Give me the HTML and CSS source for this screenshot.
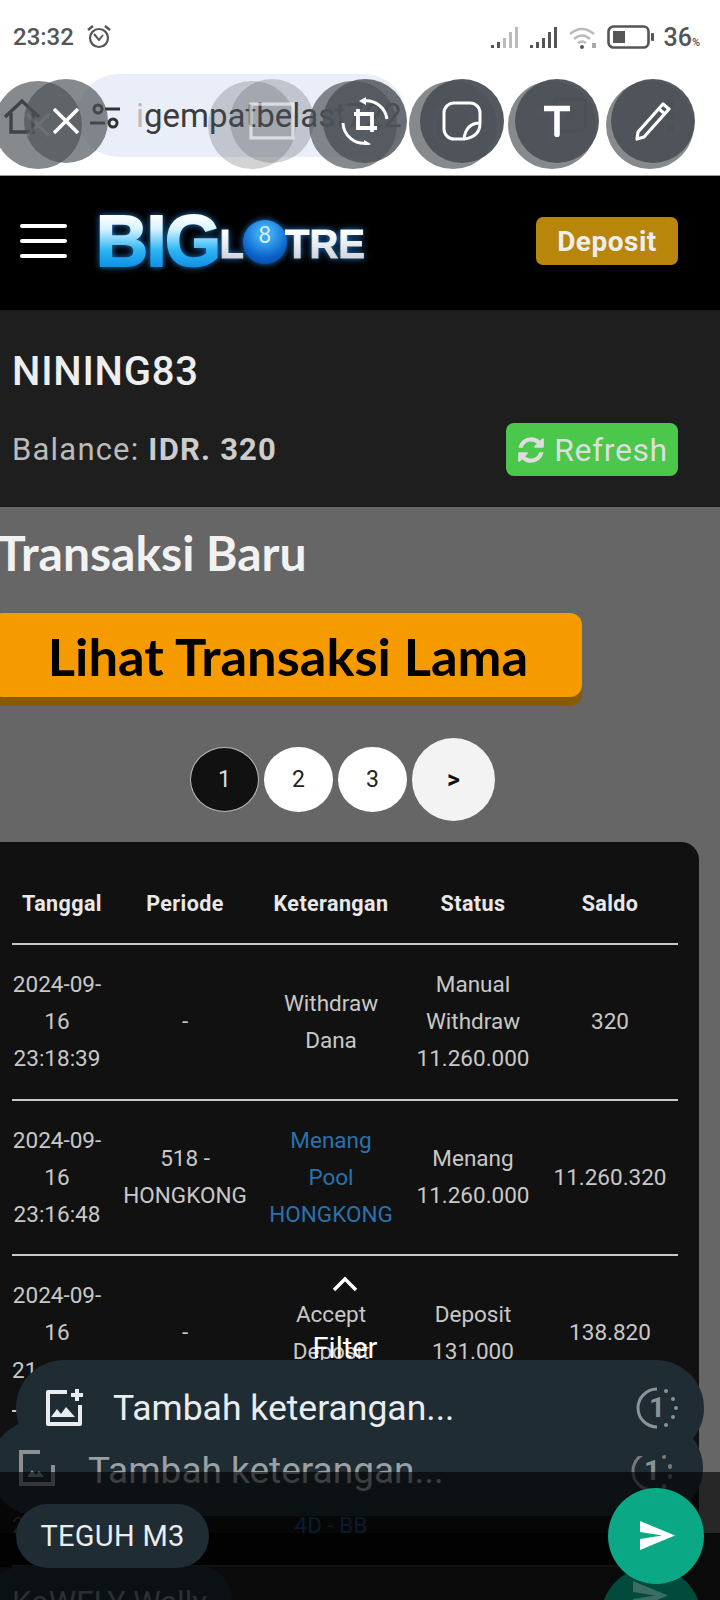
FILE: index.html

```html
<!DOCTYPE html>
<html lang="id">
<head>
<meta charset="utf-8"/>
<title>Transaksi Baru</title>
<link rel="stylesheet" href="styles.css">
</head>
<body>

<div class="status">
  <div class="status-left">
    <span class="clock">23:32</span>
    <svg class="alarm" viewBox="0 0 26 26" width="26" height="26"><circle cx="13" cy="14" r="9" fill="none" stroke="#555" stroke-width="2.2"/><path d="M8 10l5 6 4-5" fill="none" stroke="#555" stroke-width="2"/><path d="M2 6l5-4M24 6l-5-4" stroke="#555" stroke-width="2.4"/></svg>
  </div>
  <div class="status-right">
    <svg viewBox="0 0 30 24" width="30" height="24"><path d="M1 20h3v3H1zM7 17h3v6H7z" fill="#555"/><path d="M13 13h3v10h-3zM19 7h3v16h-3zM25 2h3v21h-3z" fill="#bbb"/></svg>
    <svg viewBox="0 0 30 24" width="30" height="24"><path d="M1 20h3v3H1zM7 17h3v6H7zM13 13h3v10h-3zM19 7h3v16h-3zM25 2h3v21h-3z" fill="#555"/></svg>
    <svg viewBox="0 0 30 24" width="30" height="24"><path d="M2 9q12-10 24 0M6 14q8-7 16 0M10 18q4-3 8 0" fill="none" stroke="#bbb" stroke-width="2.4"/><circle cx="14" cy="22" r="2" fill="#555"/><rect x="24" y="18" width="4" height="5" fill="#aaa"/></svg>
    <svg viewBox="0 0 48 24" width="48" height="24"><rect x="1.5" y="1.5" width="40" height="21" rx="5" fill="none" stroke="#555" stroke-width="2.6"/><rect x="6" y="6" width="12" height="12" fill="#555"/><rect x="44" y="8" width="3" height="8" rx="1" fill="#555"/></svg>
    <span class="batt">36<small>%</small></span>
  </div>
</div>

<div class="browser">
  <svg class="home-ic" viewBox="0 0 38 36" width="38" height="36"><path d="M2 19L19 3l17 16M8 15v19h22V15" fill="none" stroke="#222" stroke-width="3.4"/></svg>
  <div class="url-pill">
    <svg viewBox="0 0 32 28" width="32" height="28"><circle cx="9" cy="7" r="4" fill="none" stroke="#333" stroke-width="3"/><path d="M16 7h15M1 21h15" stroke="#333" stroke-width="3"/><circle cx="24" cy="21" r="4" fill="none" stroke="#333" stroke-width="3"/></svg>
    <span class="url-text"><i>i</i>gempatbelast722</span>
  </div>
  <span class="tab-count">3</span>
  <span class="menu-dots"></span>
</div>

<!-- tombol editor foto di atas bar browser -->
<div class="tool ghost tool-a"><svg viewBox="0 0 24 24" width="24" height="24"><path d="M1 1l22 22M23 1L1 23" stroke="#fff" stroke-opacity=".3" stroke-width="3.4"/></svg></div>
<div class="tool soft tool-b"></div>
<div class="tool ghost tool-c"><svg viewBox="0 0 48 48" width="44" height="44"><path d="M8 20a17 17 0 0 1 30-8M40 28a17 17 0 0 1-30 8" fill="none" stroke="#fff" stroke-opacity=".2" stroke-width="3"/></svg></div>
<div class="tool ghost tool-d"><svg viewBox="0 0 40 40" width="40" height="40"><rect x="2" y="2" width="36" height="36" rx="10" fill="none" stroke="#fff" stroke-opacity=".25" stroke-width="3"/></svg></div>
<div class="tool ghost tool-e"><svg viewBox="0 0 28 34" width="28" height="34"><path d="M0 4h28M14 4v30" stroke="#fff" stroke-opacity=".3" stroke-width="5"/></svg></div>
<div class="tool ghost tool-f"></div>

<div class="tool half tool-g"><svg viewBox="0 0 26 26" width="26" height="26"><path d="M1 1l24 24M25 1L1 25" stroke="#fff" stroke-width="3.6"/></svg></div>
<div class="tool soft tool-h"><svg viewBox="0 0 34 28" width="46" height="38"><rect x="1.5" y="1.5" width="31" height="25" fill="none" stroke="#fff" stroke-opacity=".6" stroke-width="2.4"/></svg></div>
<div class="tool solid crop tool-i"><svg viewBox="0 0 48 48" width="48" height="48"><path d="M22 4A21 21 0 0 1 46 22M2 26a21 21 0 0 0 24 20" fill="none" stroke="#fff" stroke-width="3"/><path d="M18 4l7-4v8zM30 47l-7 4v-8z" fill="#fff"/><path d="M13 17h18v18M17 12v19h19" fill="none" stroke="#fff" stroke-width="3.8"/></svg></div>
<div class="tool solid tool-j"><svg viewBox="0 0 40 40" width="40" height="40"><path d="M38 22V12a10 10 0 0 0-10-10H12A10 10 0 0 0 2 12v16a10 10 0 0 0 10 10h10q16-2 16-16-14 0-16 16" fill="none" stroke="#fff" stroke-width="3"/></svg></div>
<div class="tool solid tool-k"><svg viewBox="0 0 28 34" width="26" height="32"><path d="M0 3.5h28M14 3.500v28" stroke="#fff" stroke-width="6" stroke-linecap="round"/></svg></div>
<div class="tool solid tool-l"><svg viewBox="0 0 36 40" width="36" height="40"><path d="M28 3l6 5L9 36l-7 2 1-7z" fill="none" stroke="#fff" stroke-width="3.2" stroke-linejoin="round"/><path d="M24 8l6 5" stroke="#fff" stroke-width="3"/></svg></div>

<header class="site-head">
  <div class="burger"><span></span><span></span><span></span></div>
  <div class="logo">
    <span class="logo-big">BIG</span>
    <span class="logo-small">L</span>
    <span class="logo-ball">8</span>
    <span class="logo-small">TRE</span>
  </div>
  <a class="deposit" href="#">Deposit</a>
</header>

<section class="account">
  <div class="username">NINING83</div>
  <div class="balance-row">
    <div class="balance">Balance: <b>IDR. 320</b></div>
    <a class="refresh" href="#"><svg viewBox="0 0 1792 1792" width="30" height="30"><path fill="#ddd" d="M1639 1056q0 5-1 7-64 268-268 434.5t-478 166.5q-146 0-282.5-55t-243.500-157l-129 129q-19 19-45 19t-45-19-19-45v-448q0-26 19-45t45-19h448q26 0 45 19t19 45-19 45l-137 137q71 66 161 102t187 36q134 0 250-65t186-179q11-17 53-117 8-23 30-23h192q13 0 22.500 9.500t9.500 22.500zm25-800v448q0 26-19 45t-45 19h-448q-26 0-45-19t-19-45 19-45l138-138q-148-137-349-137-134 0-250 65t-186 179q-11 17-53 117-8 23-30 23h-199q-13 0-22.500-9.500t-9.500-22.500v-7q65-268 270-434.500t480-166.500q146 0 284 55.500t245 156.500l130-129q19-19 45-19t45 19 19 45z"/></svg>Refresh</a>
  </div>
</section>

<main class="content">
  <h1 class="page-title">Transaksi Baru</h1>
  <a class="old-btn" href="#">Lihat Transaksi Lama</a>

  <div class="pager">
    <span class="pg active">1</span>
    <span class="pg">2</span>
    <span class="pg">3</span>
    <span class="pg next">&gt;</span>
  </div>

  <div class="card">
    <table class="tx">
      <colgroup><col class="c1"><col class="c2"><col class="c3"><col class="c4"><col class="c5"></colgroup>
      <tr>
        <th>Tanggal</th><th>Periode</th><th>Keterangan</th><th>Status</th><th>Saldo</th>
      </tr>
      <tr>
        <td class="dt">2024-09-<br>16<br>23:18:39</td>
        <td>-</td>
        <td>Withdraw<br>Dana</td>
        <td>Manual<br>Withdraw<br>11.260.000</td>
        <td>320</td>
      </tr>
      <tr>
        <td class="dt">2024-09-<br>16<br>23:16:48</td>
        <td>518 -<br>HONGKONG</td>
        <td class="win">Menang<br>Pool<br>HONGKONG</td>
        <td>Menang<br>11.260.000</td>
        <td>11.260.320</td>
      </tr>
      <tr>
        <td class="dt">2024-09-<br>16<br><span class="cut">21</span></td>
        <td>-</td>
        <td>Accept<br>Deposit</td>
        <td>Deposit<br>131.000</td>
        <td>138.820</td>
      </tr>
      <tr class="low">
        <td class="dt"><br><br><span class="cut">2</span></td>
        <td></td>
        <td class="win"><br><br>4D - BB</td>
        <td></td>
        <td></td>
      </tr>
    </table>
  </div>
</main>

<!-- lapisan caption WhatsApp -->
<div class="filter-hint">
  <svg viewBox="0 0 26 16" width="26" height="16"><path d="M2 14L13 3l11 11" fill="none" stroke="#fff" stroke-width="3.4"/></svg>
  <span>Filter</span>
</div>

<div class="caption caption-back">
  <svg viewBox="0 0 38 38" width="38" height="38"><path d="M22 3H3v32h32V16" fill="none" stroke="#8b8f92" stroke-width="4"/><path d="M9 28l5-7 4 5 3-4 5 6z" fill="#8b8f92"/></svg>
  <span class="caption-text">Tambah keterangan...</span>
  <svg class="timer" viewBox="0 0 44 44" width="44" height="44"><path d="M22 3a19 19 0 0 0 0 38" fill="none" stroke="#777" stroke-width="3"/><path d="M34 7v1M40 17v1M40 27v1M34 37v1" stroke="#777" stroke-width="4" stroke-linecap="round"/><text x="22" y="31" text-anchor="middle" class="timer-num">1</text></svg>
</div>

<div class="scrim"></div>

<div class="ghost-name"><span>KoWELY Wally</span></div>
<div class="ghost-send"><svg viewBox="0 0 36 30" width="36" height="30"><path d="M0 0l35 14.500L0 29V18l22-3.500L0 11z" fill="#3b6d62"/></svg></div>

<div class="caption caption-front">
  <svg viewBox="0 0 38 38" width="38" height="38"><path d="M22 3H3v32h32V16" fill="none" stroke="#e9edef" stroke-width="4" stroke-linejoin="round"/><path d="M32 0v12M26 6h12" stroke="#e9edef" stroke-width="4"/><path d="M6 28l6-8 4 5 5-7 9 10z" fill="#e9edef"/></svg>
  <span class="caption-text">Tambah keterangan...</span>
  <svg class="timer" viewBox="0 0 44 44" width="44" height="44"><path d="M22 3a19 19 0 0 0 0 38" fill="none" stroke="#8b9398" stroke-width="3"/><path d="M31 5v.1M38 13v.1M41 22v.1M38 31v.1M31 39v.1" stroke="#8b9398" stroke-width="4" stroke-linecap="round"/><text x="22" y="31" text-anchor="middle" class="timer-num">1</text></svg>
</div>

<div class="name-chip">TEGUH M3</div>
<div class="send"><svg viewBox="0 0 36 30" width="36" height="30"><path d="M0 0l35 14.500L0 29V18l22-3.500L0 11z" fill="#fff"/></svg></div>

</body>
</html>
```

FILE: styles.css

```css
* { box-sizing: border-box; }
html, body { margin: 0; padding: 0; }
body { position: relative; width: 720px; height: 1600px; overflow: hidden; background: #666; font-family: Roboto, "Liberation Sans", sans-serif; color: #ddd; }
a { text-decoration: none; }

/* status bar */
.status { height: 70px; background: #fff; display: flex; justify-content: space-between; align-items: center; padding: 4px 20px 0 13px; color: #555; }
.status-left { display: flex; align-items: center; gap: 12px; }
.clock { font-size: 24px; font-weight: 500; }
.status-right { display: flex; align-items: center; gap: 9px; }
.batt { font-size: 25px; font-weight: 500; margin-left: -1px; }
.batt small { font-size: 11px; }

/* browser bar */
.browser { height: 105px; background: #fff; position: relative; display: flex; align-items: flex-start; padding: 4px 0 0 77px; }
.home-ic { position: absolute; left: 3px; top: 28px; }
.url-pill { width: 329px; height: 83px; background: #e9eef9; border-radius: 42px; display: flex; align-items: center; gap: 15px; padding-left: 12px; overflow: hidden; white-space: nowrap; flex: none; }
.url-text { font-size: 33px; color: #3c3c3c; }
.url-text i { font-style: normal; color: #bbb; }
.tab-count { position: absolute; left: 553px; top: 27px; width: 34px; height: 35px; border: 3px solid #333; border-radius: 7px; font-size: 20px; color: #333; text-align: center; line-height: 28px; }
.menu-dots { position: absolute; left: 666px; top: 30px; width: 8px; height: 8px; border-radius: 50%; background: #333; box-shadow: 0 12px 0 #333, 0 24px 0 #333; }

/* editor buttons, floating over the browser bar */
.tool { position: absolute; display: flex; align-items: center; justify-content: center; border-radius: 50%; }
.ghost { width: 88px; height: 88px; top: 81px; background: rgba(76, 82, 87, .68); }
.half { width: 84px; height: 84px; top: 79px; background: rgba(76, 82, 87, .68); }
.solid { width: 84px; height: 84px; top: 79px; background: rgba(76, 82, 87, .96); }
.solid.crop { background: rgba(76, 82, 87, .82); }
.soft { width: 84px; height: 84px; background: rgba(76, 82, 87, .26); }
.tool-a { left: -6px; }
.tool-b { left: 208px; top: 81px; width: 88px; height: 88px; }
.tool-c { left: 309px; }
.tool-d { left: 409px; }
.tool-e { left: 508px; }
.tool-f { left: 606px; }
.tool-g { left: 24px; }
.tool-h { left: 230px; top: 79px; }
.tool-i { left: 323px; }
.tool-j { left: 420px; }
.tool-k { left: 515px; }
.tool-l { left: 611px; }

/* site header */
.site-head { height: 135px; background: #000; border-top: 1px solid #999; display: flex; align-items: center; padding: 0 42px 4px 20px; }
.burger { width: 47px; display: flex; flex-direction: column; gap: 11px; }
.burger span { display: block; height: 4px; background: #fff; border-radius: 2px; }
.logo { display: flex; align-items: center; margin-left: 29px; font-family: "Liberation Sans", Arial, sans-serif; font-weight: bold; filter: drop-shadow(0 0 3px rgba(40, 150, 255, .8)); }
.logo-big { font-size: 72px; line-height: 60px; letter-spacing: -1.5px; -webkit-text-stroke: 2px transparent; background: linear-gradient(#fff 8%, #d8f2ff 30%, #2cb6f4 65%, #0a86e0 100%); -webkit-background-clip: text; background-clip: text; color: transparent; }
.logo-small { font-size: 40px; line-height: 40px; margin-top: 6px; -webkit-text-stroke: 1px transparent; background: linear-gradient(#fff 20%, #c9ccd4 100%); -webkit-background-clip: text; background-clip: text; color: transparent; }
.logo-ball { width: 44px; height: 44px; margin: 2px -2px 0 -1px; border-radius: 50%; background: radial-gradient(circle at 50% 30%, #3aa8f4 20%, #0a62c8 65%, #063f96 100%); color: #d8efff; font-family: Roboto, sans-serif; font-size: 23px; font-weight: 400; text-align: center; line-height: 32px; }
.deposit { margin-left: auto; width: 142px; height: 48px; background: #b8860b; border-radius: 7px; color: #eee; font-size: 28px; font-weight: 700; letter-spacing: .5px; display: flex; align-items: center; justify-content: center; }

/* account panel */
.account { height: 197px; background: #1e1e1e; padding: 40px 42px 0 12px; }
.username { font-size: 40px; font-weight: 500; color: #eee; line-height: 44px; letter-spacing: .8px; }
.balance-row { display: flex; align-items: center; justify-content: space-between; margin-top: 29px; }
.balance { font-size: 31px; color: #bbb; letter-spacing: 1.2px; }
.balance b { font-weight: 700; color: #ccc; }
.refresh { width: 172px; height: 53px; background: #4bc74b; border-radius: 8px; color: #ddd; font-size: 32px; letter-spacing: .6px; display: flex; align-items: center; justify-content: center; gap: 8px; }

/* content */
.content { padding-top: 14px; }
.page-title { margin: 0 0 0 -3px; font-family: Lato, "Noto Sans", sans-serif; font-weight: 700; font-size: 48px; line-height: 64px; color: #f2f2f2; }
.old-btn { display: flex; align-items: center; justify-content: center; width: 592px; height: 84px; margin: 28px 0 0 -10px; padding-left: 4px; background: #f59b00; border-radius: 12px; box-shadow: 0 9px 0 #8a5a00; color: #000; font-family: Lato, "Noto Sans", sans-serif; font-weight: 700; font-size: 52.500px; }

.pager { display: flex; align-items: center; gap: 5px; margin: 41px 0 0 190px; }
.pg { width: 69px; height: 65px; border-radius: 50%; background: #fff; color: #222; font-size: 23px; display: flex; align-items: center; justify-content: center; }
.pg.active { background: #111; color: #ddd; border: 1.500px solid #bbb; }
.pg.next { width: 83px; height: 83px; background: #f3f3f3; color: #111; font-weight: 700; font-size: 25px; }

.card { width: 715px; margin: 21px 0 0 -16px; padding: 0 0 0 28px; background: #111; border-radius: 18px; }
.tx { width: 666px; border-collapse: collapse; table-layout: fixed; }
col.c1 { width: 100px; }
col.c2 { width: 146px; }
col.c3 { width: 146px; }
col.c4 { width: 138px; }
col.c5 { width: 136px; }
.tx th { height: 102px; font-size: 21.500px; font-weight: 700; color: #e8e8e8; letter-spacing: .4px; padding: 22px 0 0; text-align: center; }
.tx td { padding: 21px 0; font-size: 22.500px; line-height: 37.200px; color: #c8c8c8; text-align: center; }
.tx tr { border-bottom: 2px solid #c8c8c8; }
.tx td.dt { padding-right: 10px; }
.tx td.win { color: #2a72ae; }
.tx tr.low td { color: #444; }
.tx tr.low td.win { color: #174a78; }
.cut { display: inline-block; width: 90px; text-align: left; }

/* overlay: hint, caption, chips */
.filter-hint { position: absolute; left: 295px; top: 1276px; width: 100px; display: flex; flex-direction: column; align-items: center; gap: 40px; color: #fff; font-size: 29px; line-height: 32px; }
.caption { position: absolute; display: flex; align-items: center; border-radius: 48px; background: #1f2c34; }
.caption-front { left: 16px; top: 1360px; width: 688px; height: 96px; padding: 0 25px 0 29px; }
.caption-back { left: -10px; top: 1420px; width: 713px; height: 96px; padding: 29px 29px 0 28px; align-items: flex-start; }
.caption-text { font-size: 35.500px; margin-left: 30px; color: #e9edef; }
.caption-back .caption-text { font-size: 37px; color: #9aa0a3; margin-left: 32px; }
.timer { margin-left: auto; }
.timer-num { font-family: Roboto, sans-serif; font-size: 28px; font-weight: 700; fill: #8b9398; }
.scrim { position: absolute; left: 0; top: 1472px; width: 720px; height: 128px; background: linear-gradient(rgba(0, 0, 0, .62) 0 61px, rgba(0, 0, 0, .9) 61px); }
.ghost-name { position: absolute; left: -10px; top: 1566px; width: 242px; height: 64px; background: #0b1013; border-radius: 32px; padding-left: 22px; color: #2c3033; font-size: 31px; line-height: 74px; white-space: nowrap; }
.ghost-send { position: absolute; left: 601px; top: 1567px; width: 100px; height: 100px; border-radius: 50%; background: #024a3b; display: flex; justify-content: center; padding-top: 14px; }
.name-chip { position: absolute; left: 16px; top: 1504px; width: 193px; height: 64px; background: #1f2c34; border-radius: 32px; color: #e9edef; font-size: 29px; display: flex; align-items: center; justify-content: center; letter-spacing: .3px; }
.send { position: absolute; left: 608px; top: 1488px; width: 96px; height: 96px; border-radius: 50%; background: #0aa884; display: flex; align-items: center; justify-content: center; padding-left: 4px; }
```
